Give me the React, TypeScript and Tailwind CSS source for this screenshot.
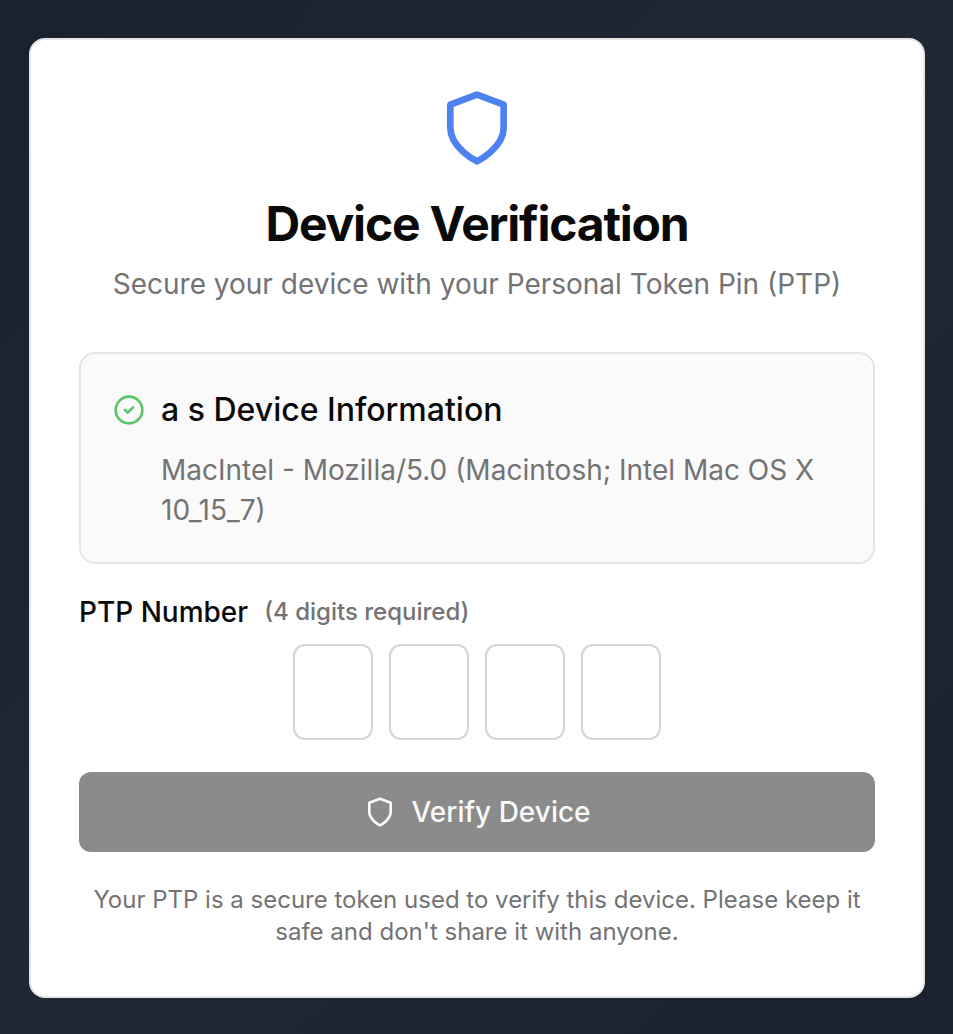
import React from "react";

function Shield({ className }: { className: string }) {
  return (
    <svg viewBox="0 0 24 24" fill="none" stroke="currentColor" strokeWidth="2" strokeLinecap="round" strokeLinejoin="round" className={className}>
      <path d="M12 22s8-4 8-10V5l-8-3-8 3v7c0 6 8 10 8 10" />
    </svg>
  );
}

export default function App() {
  return (
    <main className="h-[1034px] bg-linear-to-br from-[#1a212e] via-[#202835] to-[#1a212e] pl-[29px] pr-7 pt-[38px] font-['Inter',sans-serif] text-[#0a0a0a] antialiased">
      <section className="flex h-[960px] flex-col rounded-2xl border-2 border-[#e5e5e5] bg-white px-12 pt-12">
        <header className="flex flex-col items-center text-center">
          <Shield className="size-20 text-[#4d82f0]" />
          <h1 className="mt-6 text-[48px] leading-[64px] font-bold tracking-[-1.2px]">Device Verification</h1>
          <p className="mt-2 text-[28px] leading-10 text-[#737373]">Secure your device with your Personal Token Pin (PTP)</p>
        </header>
        <div className="mt-12 h-[212px] rounded-2xl border-2 border-[#e5e5e5] bg-[#fafafa] px-8 pt-8">
          <div className="flex h-12 items-center gap-4">
            <svg viewBox="0 0 24 24" fill="none" stroke="currentColor" strokeWidth="2" strokeLinecap="round" strokeLinejoin="round" className="size-8 text-[#5ac468]">
              <circle cx="12" cy="12" r="10" /><path d="m9 12 2 2 4-4" />
            </svg>
            <h2 className="text-[32px] font-medium">a s Device Information</h2>
          </div>
          <p className="mt-4 pl-12 text-[28px] leading-10 text-[#737373]">MacIntel - Mozilla/5.0 (Macintosh; Intel Mac OS X 10_15_7)</p>
        </div>
        <div className="mt-8 flex h-8 items-center gap-4">
          <label htmlFor="digit-0" className="text-[28px] font-medium">PTP Number</label>
          <span className="text-2xl font-medium text-[#737373]">(4 digits required)</span>
        </div>
        <div className="mt-4 flex justify-center gap-4">
          {[0, 1, 2, 3].map((i) => (
            <input key={i} id={`digit-${i}`} maxLength={1} className="h-24 w-20 rounded-xl border-2 border-[#d1d5db] bg-white text-center text-3xl" />
          ))}
        </div>
        <button className="mt-8 flex h-20 items-center justify-center gap-[15px] rounded-xl bg-[#8b8b8b] pl-px text-[28px] font-medium text-[#fafafa]">
          <Shield className="size-8" />
          Verify Device
        </button>
        <p className="mt-8 px-2 text-center text-2xl leading-8 text-[#737373]">Your PTP is a secure token used to verify this device. Please keep it safe and don't share it with anyone.</p>
      </section>
    </main>
  );
}
